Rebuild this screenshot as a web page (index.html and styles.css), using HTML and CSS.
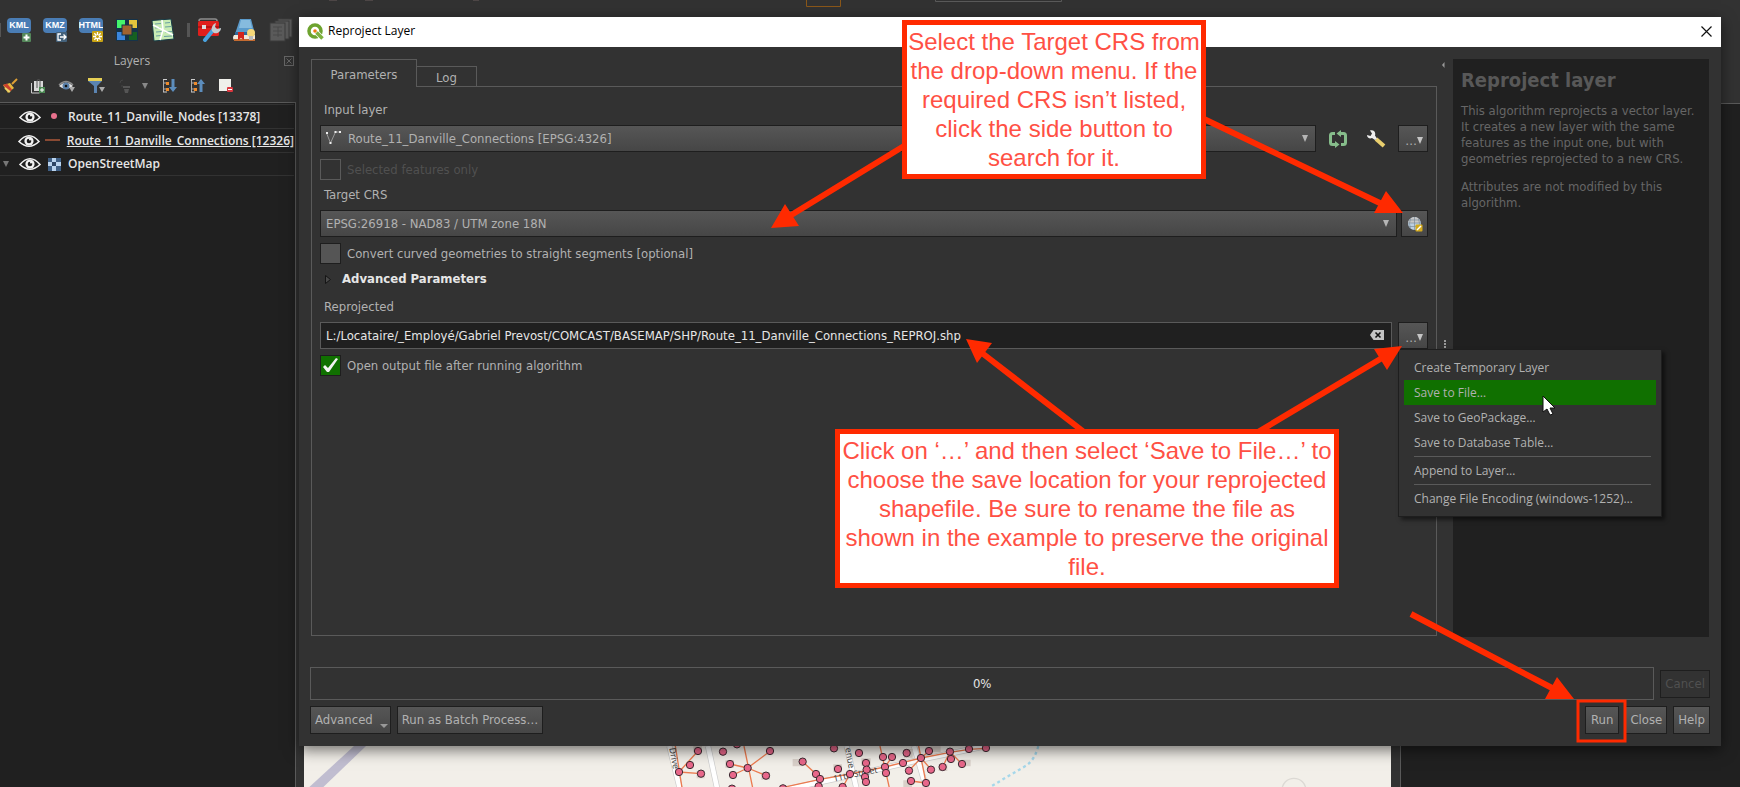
FILE: index.html
```html
<!DOCTYPE html>
<html lang="en">
<head>
<meta charset="utf-8">
<title>Reproject Layer</title>
<link rel="stylesheet" href="styles.css">
</head>
<body>
<div class="app">
  <aside class="dock">
    <div class="toolbar">
      <svg class="edge" width="1" height="14"><rect width="1" height="14" fill="#555"/></svg>
      <svg width="24" height="24" viewBox="0 0 24 24"><rect width="24" height="15" rx="4" fill="#4a7db5"/><text x="12" y="10" class="badge">KML</text><rect x="15" y="15" width="9" height="9" rx="1" fill="#54875a"/><path d="M19.500 16.500v6M16.500 19.500h6" stroke="#fff" stroke-width="2"/></svg>
      <svg width="24" height="24" viewBox="0 0 24 24"><rect width="24" height="15" rx="4" fill="#4a7db5"/><text x="12" y="10" class="badge">KMZ</text><rect x="13" y="14" width="11" height="10" rx="1" fill="#45627b"/><path d="M18 16h-3v6h3M17 19h6M20.500 16.500l2.500 2.500-2.500 2.500" stroke="#fff" stroke-width="1.300" fill="none"/></svg>
      <svg width="24" height="24" viewBox="0 0 24 24"><rect width="24" height="15" rx="4" fill="#4a7db5"/><text x="12" y="10" class="badge">HTML</text><rect x="13" y="13" width="11" height="11" rx="1" fill="#c9a414"/><path d="M18.500 14v9M14 18.500h9M15.300 15.300l6.400 6.400M21.700 15.300l-6.400 6.400" stroke="#fff" stroke-width="1.300"/><circle cx="18.500" cy="18.500" r="1.500" fill="#c9a414"/></svg>
      <svg width="24" height="24" viewBox="0 0 24 24"><rect x="1" y="1" width="22" height="22" fill="#163349"/><rect x="2" y="2" width="8" height="8" fill="#45f56b"/><rect x="14" y="2" width="8" height="8" fill="#e3c43c"/><rect x="2" y="14" width="8" height="8" fill="#3b86dd"/><rect x="14" y="14" width="8" height="8" fill="#166021"/><rect x="7" y="7" width="10" height="10" fill="#a0632f" stroke="#163349"/></svg>
      <svg width="24" height="24" viewBox="0 0 24 24"><path d="M1 2.500L20 1l3 20-20 2z" fill="#c8ecb4" stroke="#173b47"/><path d="M4 6l6-.500M14 5l5-.500M4 10l5-.500M14 9l6-.500M5 14l6-.500M14 14l7-.500M5 18l5-.500M13 18.500l8-.500" stroke="#6aa0a0" stroke-width="1.200"/><path d="M2 7l20 10M11 2l1 10-3 10" stroke="#fff" stroke-width="1.600" fill="none"/></svg>
      <svg class="sep" width="3" height="14"><rect width="3" height="14" fill="#555"/></svg>
      <svg width="24" height="24" viewBox="0 0 24 24"><path d="M2 3q0-2 2-2h14q2 0 2 2" stroke="#8d8d8d" fill="none" stroke-width="1.500"/><rect x="1" y="3" width="21" height="15" rx="1.500" fill="#e01f1c"/><path d="M1 9h21" stroke="#a81010" stroke-width="1.500"/><rect x="5" y="7" width="4" height="4" fill="#ddd"/><path d="M8 22l9-11" stroke="#4aa3df" stroke-width="4" stroke-linecap="round"/><path d="M15 13c-1-4 1-7 4-8l-1 4 2 2 4-1c0 4-4 6-7 5z" fill="#c4ccd0"/></svg>
      <svg width="24" height="24" viewBox="0 0 24 24"><path d="M7 1h11l4 15H2z" fill="#5b9bcb"/><path d="M8 2h9l2 8H6z" fill="#86bbde"/><path d="M2 14h20v4H2z" fill="#2f699b"/><path d="M1 17h21v5H1q-2-2 0-5z" fill="#efe9dc"/><path d="M1 22h21" stroke="#c46b31" stroke-width="2"/><path d="M5 14h6v8l-3-2-3 2z" fill="#d2251c"/><circle cx="18" cy="15" r="4" fill="#f6d879"/><rect x="16" y="18" width="4" height="4" fill="#b9b9b9"/></svg>
      <svg width="24" height="24" viewBox="0 0 24 24" fill="#5a5a5a" stroke="#3b3b3b"><rect x="9" y="1" width="14" height="18"/><rect x="6" y="3" width="14" height="18"/><rect x="1" y="5" width="15" height="18"/><path d="M4 9h9M4 13h9M4 17h9M9 9v10" stroke="#484848"/></svg>
    </div>
    <div class="dock-title"><span>Layers</span>
      <svg width="10" height="10" viewBox="0 0 10 10" fill="none" stroke="#666"><rect x=".5" y=".5" width="9" height="9"/><path d="M2.500 2.500l5 5M7.500 2.500l-5 5"/></svg>
    </div>
    <div class="layer-tools">
      <svg width="16" height="16" viewBox="0 0 16 16"><path d="M1 7l7-2 4 5-6 5z" fill="#e8b73d"/><path d="M1 7l4-1.500 5 6-2 2z" fill="#c9402e"/><path d="M3 10l5 4" stroke="#e9d26a" stroke-width="2"/><path d="M10 6l5-5" stroke="#dd9f35" stroke-width="2"/></svg>
      <svg width="16" height="16" viewBox="0 0 16 16"><path d="M1.500 5v10h8" stroke="#ccc" fill="none"/><rect x="4" y="3" width="9" height="10" fill="#d9d9d9"/><path d="M7 10V3a1.500 1.500 0 013 0v7" fill="none" stroke="#555"/><rect x="9" y="9" width="6" height="6" fill="#4c8a54"/><path d="M12 10v4M10 12h4" stroke="#fff"/></svg>
      <svg width="18" height="16" viewBox="0 0 18 16"><path d="M1 8q7-7 14 0-7 6-14 0z" fill="#e3e3e3"/><path d="M1 7q7-7 14 0" stroke="#8a8a8a" fill="none" stroke-width="1.500"/><circle cx="8" cy="8" r="3.500" fill="#5a7fa8"/><circle cx="8" cy="8" r="1.300" fill="#111"/><path d="M11 9h6l-3 5z" fill="#aaa"/></svg>
      <svg width="18" height="16" viewBox="0 0 18 16"><path d="M0 1h14v2L9 8v7H6V8L0 3z" fill="#5b84b1"/><rect x="0" y="0" width="14" height="3" fill="#e6cf55"/><path d="M11 9h6l-3 5z" fill="#aaa"/></svg>
      <svg width="16" height="16" viewBox="0 0 16 16"><path d="M5 2a3 3 0 00-3 3M3 8h2" stroke="#444" fill="none"/><rect x="5" y="8" width="7" height="2" fill="#555"/><path d="M6 11h5l-1 4H7z" fill="#555"/></svg>
      <svg class="drop" width="8" height="16" viewBox="0 0 8 16"><path d="M0 5h6L3 11z" fill="#888"/></svg>
      <svg width="16" height="16" viewBox="0 0 16 16"><path d="M1.500 1v13M1 5h4M1 11h4" stroke="#aaa"/><path d="M1 1.500h4M1 14h4" stroke="#ccc"/><rect x="4" y="4" width="3" height="3" fill="#ee8b2c"/><rect x="4" y="10" width="3" height="3" fill="#ee8b2c"/><path d="M11 1v10" stroke="#5c8dbd" stroke-width="3"/><path d="M7 9h8l-4 5z" fill="#5c8dbd"/></svg>
      <svg width="16" height="16" viewBox="0 0 16 16"><path d="M1.500 1v13M1 5h4M1 11h4" stroke="#aaa"/><path d="M1 1.500h4M1 14h4" stroke="#ccc"/><rect x="4" y="4" width="3" height="3" fill="#ee8b2c"/><rect x="4" y="10" width="3" height="3" fill="#ee8b2c"/><path d="M11 14V4" stroke="#5c8dbd" stroke-width="3"/><path d="M7 6h8l-4-5z" fill="#5c8dbd"/></svg>
      <svg width="16" height="16" viewBox="0 0 16 16"><rect x="1" y="1" width="12" height="12" fill="#efefea"/><rect x="9" y="9" width="6" height="5" rx="1" fill="#d9363e"/><path d="M10 11.500h4" stroke="#fff"/></svg>
    </div>
    <ul class="tree">
      <li><span class="twist"></span>
        <svg class="eye" width="22" height="14" viewBox="0 0 22 14"><path d="M1 7.500Q11-4 21 7.500 11 17 1 7.500z" fill="none" stroke="#f2f2f2" stroke-width="1.600"/><circle cx="11" cy="7" r="4.600" fill="#f2f2f2"/><circle cx="11" cy="7" r="2.300" fill="#1c1c1c"/><circle cx="12" cy="5.500" r="1" fill="#fff"/></svg>
        <svg class="sym" width="16" height="16"><circle cx="8" cy="7" r="3" fill="#e8718d"/></svg><span>Route_11_Danville_Nodes [13378]</span></li>
      <li><span class="twist"></span>
        <svg class="eye" width="22" height="14" viewBox="0 0 22 14"><path d="M1 7.500Q11-4 21 7.500 11 17 1 7.500z" fill="none" stroke="#f2f2f2" stroke-width="1.600"/><circle cx="11" cy="7" r="4.600" fill="#f2f2f2"/><circle cx="11" cy="7" r="2.300" fill="#1c1c1c"/><circle cx="12" cy="5.500" r="1" fill="#fff"/></svg>
        <svg class="sym" width="16" height="16"><path d="M0 7h15" stroke="#8a4a33" stroke-width="2"/></svg><span class="current">Route_11_Danville_Connections [12326]</span></li>
      <li><span class="twist"><svg width="6" height="6"><path d="M0 0h6L3 6z" fill="#777"/></svg></span>
        <svg class="eye" width="22" height="14" viewBox="0 0 22 14"><path d="M1 7.500Q11-4 21 7.500 11 17 1 7.500z" fill="none" stroke="#f2f2f2" stroke-width="1.600"/><circle cx="11" cy="7" r="4.600" fill="#f2f2f2"/><circle cx="11" cy="7" r="2.300" fill="#1c1c1c"/><circle cx="12" cy="5.500" r="1" fill="#fff"/></svg>
        <svg class="sym" width="16" height="16"><rect x="2" y="2" width="13" height="13" fill="#3f5f85"/><path d="M6 2h4v4H6zM2 6h4v4H2zM10 6h5v4h-5zM6 10h4v5H6z" fill="#b9d3ee"/><path d="M6 6h4v4H6z" fill="#2d4565"/></svg><span>OpenStreetMap</span></li>
    </ul>
  </aside>
  <main class="main">
    <div class="main-tools">
      <svg width="800" height="8"><path d="M510.500 0v6.500h34V0" stroke="#8a5719" fill="none"/><path d="M639.500 0v1.500h126V0" stroke="#5a5a5a" fill="none"/><path d="M33 0h8M69 0h8M177 0h6" stroke="#6a5c5c"/></svg>
    </div>
    <div class="work">
      <div class="map">
        <svg width="1087" height="41" viewBox="0 0 1087 41">
          <g transform="translate(336 -11) scale(.3333)">
            <path d="M-858 33h36L-950 156h-42z" fill="#c0bdd0"/>
            <g fill="none" stroke="#ccc" stroke-width="18"><path d="M88 33l32 130M204 33l28 130M620 33l30 130M822 33l38 130M430 165L640 120 850 72 1040 33"/></g>
            <g fill="none" stroke="#fff" stroke-width="14"><path d="M88 33l32 130M204 33l28 130M620 33l30 130M822 33l38 130M430 165L640 120 850 72 1040 33"/></g>
            <g fill="#d9d0c9"><path d="M160 30h26v22h-26zM170 108h24v22h-24zM256 76h26v22h-26zM364 112h26v22h-26zM458 72h30v22h-30zM580 88h26v24h-26zM664 70h28v22h-28zM792 42h26v26h-26zM872 34h30v18h-30zM896 88h26v20h-26zM966 74h26v20h-26zM790 136h26v20h-26z"/></g>
            <path d="M1195 33q-10 40-35 58L1050 156" stroke="#a5d7ea" stroke-width="7" stroke-dasharray="9 9" fill="none"/>
            <g fill="none" stroke="#ec7b50" stroke-width="4"><path d="M106 33l20 125M117 111l57-63M117 111l66 5M312 33l26 125M323 99l68-51M323 99l-53-12M323 99l-44 21M323 99l55 23M430 157l110-24 90-16 105-21 108-27 87-17 57-9 51-3M488 80l40 37M720 33l28 125M836 33l22 110M843 69l25-22M843 69l-36 38M843 69l30 34M930 50l35 36M930 50l-22 46M630 117l-22 40M813 138l45 6M735 96l21-30M680 104l-2-20"/></g>
            <g class="street"><text transform="translate(88 40) rotate(80)">Drive</text><text transform="translate(616 40) rotate(80)">enue</text><text transform="translate(582 140) rotate(-12)">11th Street</text></g>
            <g fill="#e8678a" stroke="#3a2a30" stroke-width="3"><circle cx="174" cy="48" r="11"/><circle cx="150" cy="90" r="11"/><circle cx="117" cy="111" r="11"/><circle cx="183" cy="116" r="11"/><circle cx="249" cy="50" r="11"/><circle cx="291" cy="28" r="11"/><circle cx="390" cy="48" r="11"/><circle cx="270" cy="87" r="11"/><circle cx="323" cy="99" r="11"/><circle cx="279" cy="120" r="11"/><circle cx="378" cy="122" r="11"/><circle cx="276" cy="161" r="11"/><circle cx="429" cy="160" r="11"/><circle cx="488" cy="80" r="11"/><circle cx="528" cy="117" r="11"/><circle cx="540" cy="132" r="11"/><circle cx="536" cy="154" r="11"/><circle cx="582" cy="40" r="11"/><circle cx="594" cy="102" r="11"/><circle cx="608" cy="156" r="11"/><circle cx="630" cy="117" r="11"/><circle cx="657" cy="54" r="11"/><circle cx="678" cy="84" r="11"/><circle cx="680" cy="104" r="11"/><circle cx="675" cy="126" r="11"/><circle cx="678" cy="141" r="11"/><circle cx="729" cy="66" r="11"/><circle cx="756" cy="66" r="11"/><circle cx="735" cy="96" r="11"/><circle cx="738" cy="114" r="11"/><circle cx="789" cy="84" r="11"/><circle cx="800" cy="54" r="11"/><circle cx="807" cy="107" r="11"/><circle cx="813" cy="138" r="11"/><circle cx="843" cy="69" r="11"/><circle cx="867" cy="48" r="11"/><circle cx="873" cy="104" r="11"/><circle cx="858" cy="144" r="11"/><circle cx="908" cy="96" r="11"/><circle cx="930" cy="50" r="11"/><circle cx="933" cy="72" r="11"/><circle cx="966" cy="87" r="11"/><circle cx="987" cy="42" r="11"/><circle cx="1038" cy="39" r="11"/></g>
            <circle cx="1962" cy="166" r="36" fill="none" stroke="#dcd9d4" stroke-width="4"/>
          </g>
        </svg>
      </div>
      <div class="side"></div>
    </div>
  </main>
</div>

<section class="dialog" aria-labelledby="dlg-title">
  <header class="titlebar">
    <svg width="17" height="17" viewBox="0 0 17 17"><circle cx="8" cy="8" r="6" fill="none" stroke="#6ea32f" stroke-width="3.500"/><path d="M9 9l6.500 6.500" stroke="#fff" stroke-width="5"/><path d="M9.500 9.500l6 6" stroke="#7fb13c" stroke-width="3.500"/><circle cx="8" cy="8" r="1.800" fill="#ee7913"/></svg>
    <h1 id="dlg-title">Reproject Layer</h1>
    <button class="close" aria-label="Close window"><svg width="11" height="11" viewBox="0 0 11 11"><path d="M.5.5l10 10M10.500.5l-10 10" stroke="#111" stroke-width="1.200"/></svg></button>
  </header>
  <div class="body">
    <div class="columns">
      <div class="left">
        <div class="tabs" role="tablist"><button class="tab active" role="tab" aria-selected="true">Parameters</button><button class="tab" role="tab" aria-selected="false">Log</button><span class="tabline"></span></div>
        <form class="pane">
          <label class="caption" for="input-layer">Input layer</label>
          <div class="row">
            <div class="combo with-icon">
              <svg class="lead" width="16" height="16" viewBox="0 0 16 16"><path d="M1.500 3l4 10 5-11h4" stroke="#aaa" fill="none" stroke-width=".8"/><path d="M1 2h2v2H1zM4.500 12h2v2h-2zM9.500 1h2v2h-2zM14 1h2v2h-2z" fill="#eee"/></svg>
              <select id="input-layer"><option>Route_11_Danville_Connections [EPSG:4326]</option></select>
              <svg class="arrow" width="6" height="7"><path d="M0 0h6L3 7z" fill="#b5b5b5"/></svg>
            </div>
            <button type="button" class="flat" aria-label="Iterate over features"><svg width="20" height="18" viewBox="0 0 20 18"><path d="M7 3.500H4.500q-2 0-2 2v7q0 2 2 2H7M13 14.500h2.500q2 0 2-2v-7q0-2-2-2H12" stroke="#86bd8b" stroke-width="3" fill="none"/><path d="M13 0v7L8.500 3.500zM7 11v7l4.500-3.500z" fill="#86bd8b"/></svg></button>
            <button type="button" class="flat" aria-label="Advanced options"><svg width="20" height="18" viewBox="0 0 20 18"><path d="M10 9l8 7" stroke="#e9cf6e" stroke-width="4"/><path d="M4 .5c4-1 6 2 5 5l2 3-2 1.500-3-2C4 9 1 8 1 5l3.500 1L6 3.500z" fill="#eee"/></svg></button>
            <button type="button" class="btn more" aria-label="Browse input">…<svg width="6" height="7"><path d="M0 0h6L3 7z" fill="#c5c5c5"/></svg></button>
          </div>
          <label class="check off"><input type="checkbox" disabled>Selected features only</label>
          <label class="caption" for="crs">Target CRS</label>
          <div class="row tight">
            <div class="combo">
              <select id="crs"><option>EPSG:26918 - NAD83 / UTM zone 18N</option></select>
              <svg class="arrow" width="6" height="7"><path d="M0 0h6L3 7z" fill="#b5b5b5"/></svg>
            </div>
            <button type="button" class="btn globe" aria-label="Select CRS"><svg width="16" height="16" viewBox="0 0 16 16"><circle cx="7.500" cy="7.500" r="6.500" fill="#bcd0e2"/><path d="M2 4q5.500-6 11 0v3H1z" fill="#c9c9c9"/><path d="M1 7h13M7.500 1v13M3.500 2.500q-2 5 0 10M11.500 2.500q2 5 0 10M2 4h11M2 10.500h10" stroke="#7d8c9b" stroke-width=".7" fill="none"/><rect x="8.500" y="8.500" width="7" height="7" rx="1" fill="#d3aa1c"/><path d="M10 14l4-4" stroke="#fff" stroke-width="1.500"/></svg></button>
          </div>
          <label class="check"><input type="checkbox">Convert curved geometries to straight segments [optional]</label>
          <button type="button" class="group"><svg width="6" height="9" viewBox="0 0 6 9"><path d="M.5.5v8l5-4z" fill="#4a4a4a" stroke="#151515"/></svg>Advanced Parameters</button>
          <label class="caption" for="out">Reprojected</label>
          <div class="row last">
            <div class="field"><input id="out" type="text" value="L:/Locataire/_Employé/Gabriel Prevost/COMCAST/BASEMAP/SHP/Route_11_Danville_Connections_REPROJ.shp">
              <svg class="clear" width="14" height="10" viewBox="0 0 14 10"><path d="M0 5l3.500-5H14v10H3.500z" fill="#c4c4c4"/><path d="M5.500 2.500l5 5M10.500 2.500l-5 5" stroke="#111" stroke-width="1.600"/></svg></div>
            <button type="button" class="btn more" aria-label="Output options">…<svg width="6" height="7"><path d="M0 0h6L3 7z" fill="#c5c5c5"/></svg></button>
          </div>
          <label class="check"><input type="checkbox" checked>Open output file after running algorithm</label>
        </form>
      </div>
      <div class="splitter"><svg width="3" height="6"><path d="M2.500 0v6L0 3z" fill="#999"/></svg><svg class="dots" width="2" height="12"><path d="M0 0h2v2H0zM0 3h2v2H0zM0 6h2v2H0zM0 9h2v2H0z" fill="#999"/></svg></div>
      <article class="help">
        <h2>Reproject layer</h2>
        <p>This algorithm reprojects a vector layer. It creates a new layer with the same features as the input one, but with geometries reprojected to a new CRS.</p>
        <p>Attributes are not modified by this algorithm.</p>
      </article>
    </div>
    <div class="progress-row"><div class="progress" role="progressbar" aria-valuenow="0">0%</div><button class="btn text" disabled>Cancel</button></div>
    <footer class="actions">
      <button class="btn text adv">Advanced<svg width="8" height="4"><path d="M0 0h8L4 4z" fill="#999"/></svg></button><button class="btn text">Run as Batch Process…</button>
      <span class="spring"></span>
      <button class="btn text wide">Run</button><button class="btn text">Close</button><button class="btn text">Help</button>
    </footer>
  </div>
</section>

<div class="menu" role="menu">
  <button role="menuitem">Create Temporary Layer</button>
  <button role="menuitem" class="hover">Save to File…</button>
  <button role="menuitem">Save to GeoPackage…</button>
  <button role="menuitem">Save to Database Table…</button>
  <hr>
  <button role="menuitem">Append to Layer…</button>
  <hr>
  <button role="menuitem">Change File Encoding (windows-1252)…</button>
</div>

<svg class="marks">
  <g stroke="#ff2a00" stroke-width="6" fill="none"><path d="M904 146L788 217M1204 119L1384 205M1084 432L982 353M1258 432L1382 358M1411 614L1554 689"/></g>
  <path fill="#ff2a00" d="M771 228l14-24 14 22zM1403 213l-17-22-12 22zM966 339l26 4-15 20zM1402 346l-28 3 13 21zM1574 699l-17-22-12 22z"/>
  <rect x="1578" y="701" width="47" height="40" fill="none" stroke="#ff2a00" stroke-width="3"/>
  <path d="M1543 396v16l4-3 3 6 3-1-3-6h5z" fill="#fff" stroke="#111"/>
</svg>
<p class="callout one">Select the Target CRS from the drop-down menu. If the required CRS isn’t listed, click the side button to search for it.</p>
<p class="callout two">Click on ‘…’ and then select ‘Save to File…’ to choose the save location for your reprojected shapefile. Be sure to rename the file as<br>shown in the example to preserve the original<br>file.</p>
</body>
</html>
```
FILE: styles.css
```css
* { box-sizing: border-box; }
body {
  margin: 0;
  background: #323232;
  color: #b1b1b1;
  font: 13px/16px "DejaVu Sans Condensed", "DejaVu Sans", sans-serif;
  overflow: hidden;
}
button, input, select { font: inherit; color: inherit; }
button { padding: 0; border: 0; background: none; }
svg { display: block; flex: none; }
h1, h2, p, ul { margin: 0; padding: 0; font-weight: normal; }

.app { display: flex; height: 100vh; }
.dock { width: 296px; display: flex; flex-direction: column; font-family: "Open Sans", sans-serif; font-size: 12px; }
.toolbar { display: flex; align-items: center; gap: 12px; height: 48px; padding-top: 12px; }
.toolbar .edge { margin-right: -6px; }
.toolbar .sep { margin-right: -5px; }
.badge { font: bold 9px "Liberation Sans", sans-serif; fill: #fff; text-anchor: middle; }
.dock-title { display: flex; align-items: center; gap: 20px; height: 25px; padding-right: 2px; }
.dock-title span { flex: 1; text-align: center; }
.layer-tools { display: flex; align-items: center; gap: 12px; height: 25px; padding: 0 2px; margin-bottom: 4px; }
.layer-tools .drop { margin-left: -4px; }
.tree { flex: 1; list-style: none; background: #202020; border: solid #5a5a5a; border-width: 1px 1px 0 0; padding-top: 1px; }
.tree li { display: flex; align-items: center; height: 24px; font-weight: 600; color: #e6e6e6; border-top: 1px solid #323232; margin-right: 1px; white-space: nowrap; }
.tree li:last-child { border-bottom: 1px solid #323232; }
.twist { width: 19px; padding-left: 3px; }
.sym { margin: 0 6px 0 5px; }
.current { text-decoration: underline; }

.main { flex: 1; min-width: 0; display: flex; flex-direction: column; }
.main-tools { height: 103px; }
.work { flex: 1; display: flex; gap: 9px; padding-left: 8px; }
.map { flex: 1; min-width: 0; overflow: hidden; background: #f2efe9; display: flex; align-items: flex-end; }
.street { font: 26px "Noto Sans", sans-serif; fill: #444; }
.side { width: 340px; background: #202020; border: solid #5a5a5a; border-width: 1px 0 0 1px; }

.dialog {
  position: absolute; left: 299px; right: 19px; top: 17px; bottom: 41px;
  display: flex; flex-direction: column;
  background: #323232; box-shadow: 0 4px 14px rgba(0, 0, 0, .55);
}
.titlebar { display: flex; align-items: center; gap: 4px; height: 30px; padding: 0 9px 2px 8px; background: #fff; color: #000; font-family: "Open Sans", sans-serif; }
.titlebar h1 { flex: 1; font-size: 12px; }
.body { flex: 1; display: flex; flex-direction: column; padding: 12px 11px; min-height: 0; }
.columns { flex: 1; display: flex; min-height: 0; }
.left { flex: 1; display: flex; flex-direction: column; padding-left: 1px; }
.tabs { display: flex; align-items: flex-end; height: 28px; }
.tab { width: 60px; height: 21px; border: solid #5a5a5a; border-width: 1px 1px 1px 0; padding-top: 2px; }
.tab.active { width: 106px; height: 28px; border-width: 1px 1px 0; padding-bottom: 0; }
.tabline { flex: 1; border-bottom: 1px solid #5a5a5a; }
.pane { flex: 1; display: flex; flex-direction: column; align-items: stretch; border: solid #5a5a5a; border-width: 0 1px 1px; padding: 15px 8px 0 8px; }
.caption { padding: 0 4px; margin-bottom: 7px; }
.row { display: flex; height: 27px; margin-bottom: 7px; }
.row.tight { gap: 4px; margin-bottom: 6px; }
.row.last { gap: 6px; margin-bottom: 6px; }
.combo { position: relative; flex: 1; }
.combo select { width: 100%; height: 100%; appearance: none; border: 1px solid #1e1e1e; border-radius: 0; background: linear-gradient(#565656, #464646); padding: 0 20px 0 5px; }
.with-icon { margin-right: 3px; }
.with-icon select { padding-left: 27px; }
.lead { position: absolute; left: 5px; top: 5px; }
.arrow { position: absolute; right: 8px; top: 10px; }
.flat { width: 38px; display: flex; justify-content: center; align-items: center; }
.btn { border: 1px solid #1e1e1e; background: linear-gradient(#565656, #464646); }
.more { width: 30px; display: flex; justify-content: flex-end; align-items: center; padding: 4px 4px 0 0; }
.row .flat + .more { margin-left: 3px; }
.globe { width: 27px; display: flex; align-items: center; justify-content: center; }
.check { display: flex; align-items: center; gap: 6px; height: 21px; margin-bottom: 7px; }
.check.off { color: #505050; }
.check input { appearance: none; width: 21px; height: 21px; margin: 0; border: 1px solid #1e1e1e; background: #555; }
.check input:disabled { background: none; border-color: #5a5a5a; }
.check input:checked { background: #107000; }
.check input:checked::before { content: ""; display: block; width: 19px; height: 19px; background: #f2f2f2; clip-path: polygon(2px 11px, 4px 9px, 7px 12px, 15px 2px, 17px 3px, 8px 16px, 6px 16px); }
.group { display: flex; align-items: center; gap: 11px; height: 16px; padding-left: 5px; margin-bottom: 12px; font-weight: bold; color: #e6e6e6; }
.field { position: relative; flex: 1; }
.field input { width: 100%; height: 27px; border: 1px solid #5a5a5a; background: #202020; color: #e6e6e6; padding: 0 28px 0 5px; }
.clear { position: absolute; right: 8px; top: 8px; }
.splitter { width: 16px; padding: 3px 0 0 5px; display: flex; flex-direction: column; }
.splitter .dots { margin: 272px 0 0 2px; }
.help { width: 256px; margin: 0 1px -1px 0; padding: 8px 4px 8px 8px; background: #202020; color: #666; }
.help h2 { font-size: 20px; line-height: 26px; font-weight: bold; color: #585858; margin-bottom: 10px; }
.help p { margin-bottom: 12px; }
.progress-row { display: flex; align-items: center; gap: 6px; margin-top: 31px; }
.progress { flex: 1; height: 33px; border: 1px solid #5a5a5a; color: #e6e6e6; display: flex; align-items: center; justify-content: center; }
.text { height: 28px; padding: 0 4px; display: flex; align-items: center; }
.text:disabled { background: none; color: #505050; }
.wide { padding: 0 5px; }
.actions { display: flex; gap: 6px; margin-top: 6px; }
.adv { gap: 7px; padding-right: 2px; }
.adv svg { margin-top: 12px; }
.spring { flex: 1; }

.menu {
  position: absolute; left: 1398px; top: 349px; width: 264px; padding: 5px;
  display: flex; flex-direction: column;
  background: #323232; border: 1px solid #1e1e1e; box-shadow: 3px 3px 4px rgba(0, 0, 0, .5);
  font-family: "Open Sans", sans-serif; font-size: 12px;
}
.menu button { height: 25px; padding-left: 10px; text-align: left; }
.menu .hover { background: #107000; }
.menu hr { width: 237px; margin: 1px 0 1px 10px; border: 0; border-top: 1px solid #5a5a5a; }

.marks { position: absolute; inset: 0; width: 100%; height: 100%; pointer-events: none; }
.callout { position: absolute; border: 5px solid #ff2a00; background: #fff; color: #ff5044; font: 24px/29px "Liberation Sans", sans-serif; text-align: center; padding: 2px 0; }
.one { left: 902px; top: 20px; width: 304px; }
.two { left: 835px; top: 429px; width: 504px; }
```
